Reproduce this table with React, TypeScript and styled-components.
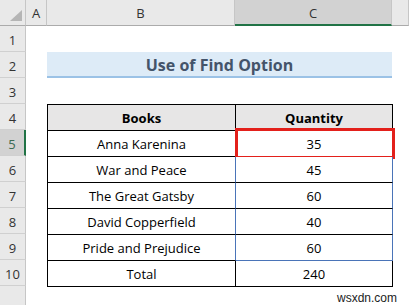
import { Fragment } from "react";
import styled, { createGlobalStyle } from "styled-components";

const GlobalStyle = createGlobalStyle`
  body {
    margin: 0;
    background: #ffffff;
    font-family: "Open Sans", "Liberation Sans", sans-serif;
  }
`;

const Sheet = styled.div(() => ({
  position: "relative",
  width: "409px",
  height: "305px",
  overflow: "hidden",
  background: "#ffffff",
}));

const HeaderBar = styled.div(() => ({
  display: "grid",
  gridTemplateColumns: "26px 21px 188px 157px 1fr",
  height: "26px",
}));

const Corner = styled.div(() => ({
  position: "relative",
  boxSizing: "border-box",
  background: "#e9e9e9",
  borderRight: "1px solid #c6c6c6",
  borderBottom: "1px solid #ababab",
}));

const CornerTriangle = styled.div(() => ({
  position: "absolute",
  right: "3px",
  bottom: "4px",
  width: 0,
  height: 0,
  borderLeft: "12px solid transparent",
  borderBottom: "11px solid #b5b5b5",
}));

const ColHead = styled.div<{ $selected?: boolean }>((props) => ({
  boxSizing: "border-box",
  display: "flex",
  alignItems: "center",
  justifyContent: "center",
  paddingTop: "1px",
  background: props.$selected ? "#d2d2d2" : "#e9e9e9",
  borderRight: "1px solid #c6c6c6",
  borderBottom: props.$selected ? "2px solid #217346" : "1px solid #ababab",
  color: "#333333",
  fontSize: "13px",
}));

const Body = styled.div(() => ({
  display: "flex",
}));

const RowHeads = styled.div(() => ({
  display: "flex",
  flexDirection: "column",
  width: "26px",
  flexShrink: 0,
  background: "#e9e9e9",
  height: "279px",
}));

const RowHead = styled.div<{ $selected?: boolean }>((props) => ({
  boxSizing: "border-box",
  height: "26px",
  display: "flex",
  alignItems: "center",
  justifyContent: "center",
  paddingTop: "2px",
  background: props.$selected ? "#d2d2d2" : "#e9e9e9",
  borderRight: props.$selected ? "2px solid #217346" : "1px solid #c6c6c6",
  borderBottom: "1px solid #d0d0d0",
  color: props.$selected ? "#3d6b52" : "#333333",
  fontSize: "13px",
}));

const RowFill = styled.div(() => ({
  flex: 1,
  borderRight: "1px solid #c6c6c6",
}));

const Content = styled.div(() => ({
  display: "flex",
  flexDirection: "column",
  paddingLeft: "21px",
}));

const Spacer = styled.div(() => ({
  height: "26px",
}));

const Title = styled.div(() => ({
  boxSizing: "border-box",
  width: "345px",
  height: "26px",
  display: "flex",
  alignItems: "center",
  justifyContent: "center",
  background: "#ddebf7",
  borderBottom: "2px solid #9bc2e6",
  color: "#44546a",
  fontWeight: 700,
  fontSize: "16px",
  paddingTop: "1px",
}));

const Table = styled.div(() => ({
  display: "grid",
  gridTemplateColumns: "188px 157px",
  gridAutoRows: "26px",
  boxSizing: "border-box",
  width: "346px",
  borderLeft: "1px solid #000000",
  borderTop: "1px solid #000000",
}));

const Cell = styled.div<{
  $head?: boolean;
  $right?: string;
  $bottom?: string;
}>((props) => ({
  position: "relative",
  boxSizing: "border-box",
  display: "flex",
  alignItems: "center",
  justifyContent: "center",
  paddingTop: "1px",
  background: props.$head ? "#e7e6e6" : "#ffffff",
  borderRight: `1px solid ${props.$right ?? "#000000"}`,
  borderBottom: `1px solid ${props.$bottom ?? "#000000"}`,
  fontWeight: props.$head ? 700 : 400,
  color: "#000000",
  fontSize: "13px",
}));

const FindMark = styled.div(() => ({
  position: "absolute",
  left: "-1px",
  top: "-3px",
  right: "-3px",
  bottom: "-3px",
  border: "3px solid #e3201b",
}));

const Watermark = styled.div(() => ({
  position: "absolute",
  right: "12px",
  bottom: "0px",
  fontFamily: '"Liberation Sans", Arial, sans-serif',
  fontSize: "12px",
  color: "#222222",
  background: "#ffffff",
  lineHeight: "14px",
}));

const blue = "#4a74b8";

const rows = [
  { book: "Anna Karenina", qty: "35" },
  { book: "War and Peace", qty: "45" },
  { book: "The Great Gatsby", qty: "60" },
  { book: "David Copperfield", qty: "40" },
  { book: "Pride and Prejudice", qty: "60" },
];

const App = (): JSX.Element => {
  return (
    <>
      <GlobalStyle />
      <Sheet>
        <HeaderBar>
          <Corner>
            <CornerTriangle />
          </Corner>
          <ColHead>A</ColHead>
          <ColHead>B</ColHead>
          <ColHead $selected>C</ColHead>
          <ColHead />
        </HeaderBar>
        <Body>
          <RowHeads>
            {[1, 2, 3, 4, 5, 6, 7, 8, 9, 10].map((n) => (
              <RowHead key={n} $selected={n === 5}>
                {n}
              </RowHead>
            ))}
            <RowFill />
          </RowHeads>
          <Content>
            <Spacer />
            <Title>Use of Find Option</Title>
            <Spacer />
            <Table>
              <Cell $head>Books</Cell>
              <Cell $head>Quantity</Cell>
              {rows.map((r, i) => (
                <Fragment key={r.book}>
                  <Cell $right={i > 0 ? blue : undefined}>{r.book}</Cell>
                  <Cell
                    $right={blue}
                    $bottom={i === rows.length - 1 ? blue : undefined}
                  >
                    {r.qty}
                    {i === 0 && <FindMark />}
                  </Cell>
                </Fragment>
              ))}
              <Cell>Total</Cell>
              <Cell>240</Cell>
            </Table>
          </Content>
        </Body>
        <Watermark>wsxdn.com</Watermark>
      </Sheet>
    </>
  );
};

export default App;
